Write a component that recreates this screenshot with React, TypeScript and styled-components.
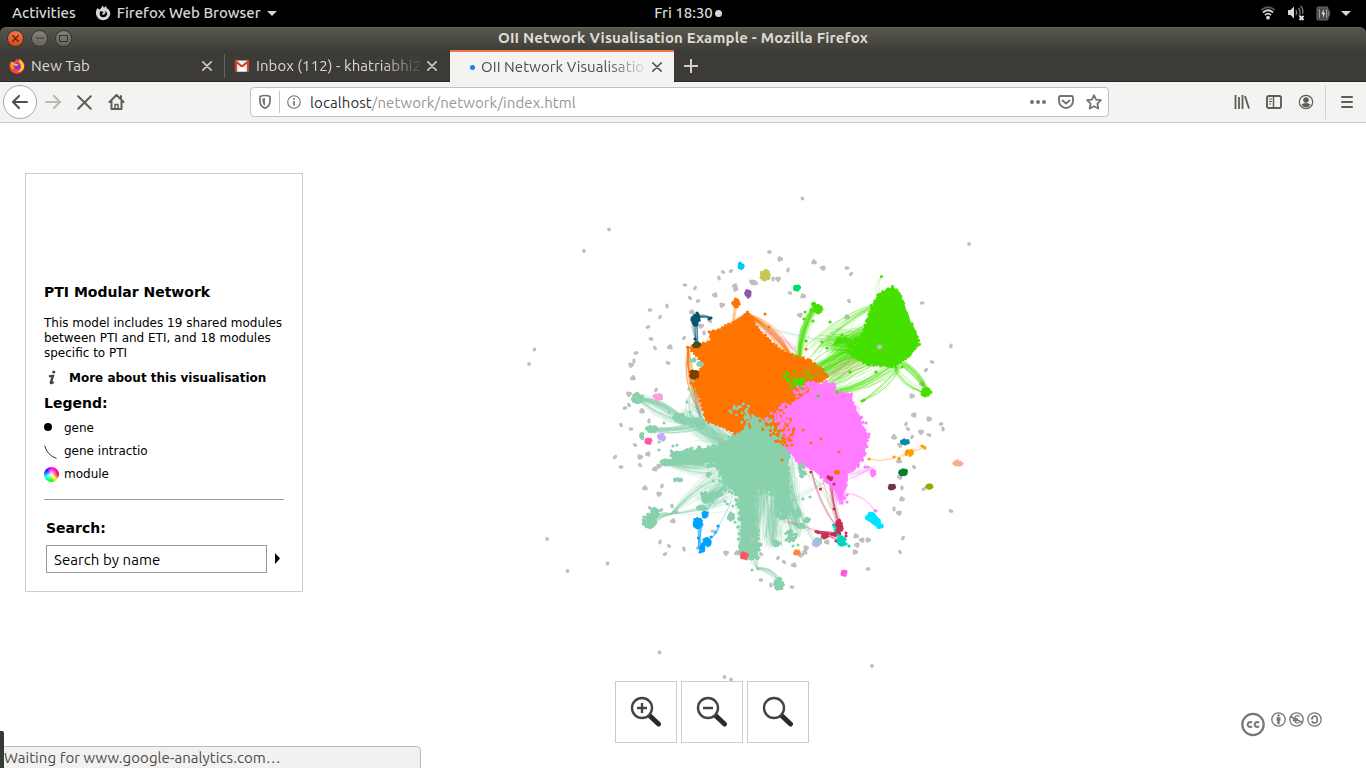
import React from "react";
import styled, { createGlobalStyle } from "styled-components";

const ui = '"Ubuntu", "Noto Sans", sans-serif';

const Global = createGlobalStyle`
  * { box-sizing: border-box; }
  html, body { margin: 0; height: 100%; overflow: hidden; background: #fff; }
  svg { display: block; flex: none; }
`;

const Screen = styled.div`
  width: 1366px;
  height: 768px;
  display: flex;
  flex-direction: column;
  background: #000;
  font-family: ${ui};
  overflow: hidden;
`;

const Text = styled.span<{ $size?: number; $track?: number }>`
  font-size: ${(p) => p.$size ?? 15}px;
  letter-spacing: ${(p) => p.$track ?? 0}px;
  white-space: nowrap;
`;

/* ---------- desktop bar ---------- */
const TopBar = styled.header`
  height: 27px;
  flex: none;
  display: grid;
  grid-template-columns: 1fr auto 1fr;
  align-items: center;
  color: #d6d6d6;
  font-weight: 500;
  line-height: 24px;
  padding-bottom: 1px;
`;
const TopLeft = styled.div`
  display: flex;
  align-items: center;
  padding-left: 12px;
`;
const AppMenu = styled.div`
  display: flex;
  align-items: center;
  margin-left: 19px;
  gap: 6px;
`;
const Clock = styled.div`
  display: flex;
  align-items: center;
  gap: 2px;
  padding-left: 10px;
`;
const ClockDot = styled.i`
  width: 7px;
  height: 7px;
  border-radius: 50%;
  background: #d6d6d6;
`;
const Tray = styled.div`
  display: flex;
  justify-content: flex-end;
  align-items: center;
  padding-right: 15px;
  gap: 11px;
`;

/* ---------- window ---------- */
const TitleBar = styled.div`
  height: 23px;
  flex: none;
  display: grid;
  grid-template-columns: 1fr auto 1fr;
  align-items: center;
  padding: 0 7px 2px;
  border-radius: 6px 6px 0 0;
  border-top: 1px solid #66655c;
  background: linear-gradient(#58574e, #3e3d39);
  color: #dfdbd2;
  font-weight: 700;
  line-height: 20px;
`;
const WindowButtons = styled.div`
  display: flex;
  gap: 7px;
`;
const WinButton = styled.span<{ $close?: boolean }>`
  width: 17px;
  height: 17px;
  display: grid;
  place-items: center;
  border-radius: 50%;
  border: 1px solid #33322e;
  background: ${(p) => (p.$close ? "linear-gradient(#f2764b, #dd4814)" : "linear-gradient(#84827a, #65645d)")};
`;

const TabStrip = styled.div`
  height: 32px;
  flex: none;
  display: flex;
  background: #3c3b37;
  border-bottom: 1px solid #282724;
`;
const Tab = styled.div<{ $active?: boolean; $line?: boolean }>`
  width: ${(p) => (p.$active ? 224 : 225)}px;
  height: ${(p) => (p.$active ? 32 : 31)}px;
  display: flex;
  align-items: center;
  padding: 0 ${(p) => (p.$active ? 12 : 13)}px 0 ${(p) => (p.$active ? 20 : 9)}px;
  gap: 6px;
  color: ${(p) => (p.$active ? "#4c4c4c" : "#dfdbd2")};
  background: ${(p) => (p.$active ? "#f4f3f1" : "transparent")};
  border-top: ${(p) => (p.$active ? "2px solid #f07746" : "0")};
  position: relative;
  ${(p) => p.$line && "&::after { content: ''; position: absolute; right: 0; top: 4px; height: 24px; border-right: 1px solid #66645e; }"}
`;
const TabLabel = styled(Text)<{ $fade?: boolean }>`
  flex: 1;
  overflow: hidden;
  line-height: 30px;
  ${(p) => p.$fade && "mask-image: linear-gradient(90deg, #000 calc(100% - 40px), rgba(0,0,0,.1));"}
`;
const Loading = styled.i`
  width: 5px;
  height: 5px;
  border-radius: 50%;
  background: #0a84ff;
`;
const NewTab = styled.div`
  width: 34px;
  display: grid;
  place-items: center;
`;

const NavBar = styled.div`
  height: 41px;
  flex: none;
  display: flex;
  align-items: center;
  background: #f4f3f1;
  border-bottom: 1px solid #cac8c6;
  color: #5e5d5a;
`;
const NavGroup = styled.div`
  width: 250px;
  padding-left: 3px;
  display: flex;
  align-items: center;
  gap: 16px;
`;
const BackButton = styled.div`
  width: 34px;
  height: 34px;
  margin-right: -8px;
  display: grid;
  place-items: center;
  border: 1px solid #aaa8a5;
  border-radius: 50%;
  background: #fff;
`;
const UrlBar = styled.div`
  width: 859px;
  height: 30px;
  display: flex;
  align-items: center;
  padding: 0 6px 0 7px;
  border: 1px solid #c3c0bd;
  border-radius: 4px;
  background: #fff;
  color: #737373;
`;
const UrlSplit = styled.i`
  width: 1px;
  height: 22px;
  margin: 0 7px;
  background: #c4c4c4;
`;
const Address = styled(Text)`
  flex: 1;
  margin-left: 9px;
  color: #969696;
  b { font-weight: 400; color: #303030; }
`;
const UrlActions = styled.div`
  display: flex;
  align-items: center;
  gap: 12px;
`;
const Tools = styled.div`
  flex: 1;
  height: 100%;
  display: flex;
  align-items: center;
  justify-content: flex-end;
  gap: 16px;
  padding-right: 12px;
`;
const MenuCell = styled.div`
  height: 34px;
  padding-left: 14px;
  margin-left: -5px;
  display: flex;
  align-items: center;
  border-left: 1px solid #d5d3d1;
`;

/* ---------- page ---------- */
const Page = styled.main`
  flex: 1;
  position: relative;
  background: #fff;
  padding: 50px 0 0 25px;
`;
const GraphCanvas = styled.svg`
  position: absolute;
  left: 0;
  top: 0;
`;
const Panel = styled.aside`
  position: relative;
  width: 278px;
  height: 419px;
  padding: 109px 18px 0;
  border: 1px solid #ccc;
  background: #fff;
  color: #000;
  font-family: "DejaVu Sans", sans-serif;
  font-size: 12px;
  line-height: 15px;
`;
const Heading = styled.h2`
  margin: 0;
  font-size: 14px;
  line-height: 18px;
`;
const Intro = styled.p`
  margin: 15px -10px 0 0;
`;
const More = styled.div`
  display: flex;
  align-items: center;
  height: 16px;
  margin: 9px 0 8px 3px;
  font-weight: 700;
  gap: 12px;
`;
const LegendRow = styled.div`
  height: 23px;
  display: flex;
  align-items: center;
`;
const LegendMark = styled.span`
  width: 20px;
`;
const Gene = styled.i`
  display: block;
  width: 8px;
  height: 8px;
  margin-bottom: 3px;
  border-radius: 50%;
  background: #000;
`;
const Wheel = styled.i`
  display: block;
  width: 15px;
  height: 15px;
  margin-bottom: 1px;
  border-radius: 50%;
  background: radial-gradient(#fff, rgba(255, 255, 255, 0) 60%),
    conic-gradient(#f0f, #f04 25%, #ff0 38%, #0f0 50%, #0ff 70%, #20f 85%, #f0f);
`;
const LegendList = styled.div`
  padding-top: 5px;
`;
const Rule = styled.div`
  width: 240px;
  height: 1px;
  margin: 13px 0 19px;
  background: #999;
`;
const SearchRow = styled.div`
  display: flex;
  align-items: center;
  margin-top: 8px;
  gap: 8px;
`;
const SearchField = styled.div`
  width: 221px;
  height: 28px;
  padding-left: 7px;
  border: 1px solid #999;
  font-family: ${ui};
  line-height: 28px;
`;
const SearchArrow = styled.svg`
  margin-bottom: 2px;
`;
const SearchBlock = styled.section`
  padding-left: 2px;
`;
const ZoomBar = styled.div`
  position: absolute;
  left: 615px;
  top: 558px;
  display: flex;
  gap: 4px;
`;
const ZoomButton = styled.div`
  width: 62px;
  height: 62px;
  display: grid;
  place-items: center;
  border: 1px solid #ccc;
  background: #fff;
`;
const License = styled.div`
  position: absolute;
  right: 44px;
  bottom: 31px;
  display: flex;
  align-items: flex-start;
  gap: 3px;
`;
const LicenseMark = styled.span`
  margin-right: 3px;
`;
const Status = styled.div`
  position: absolute;
  left: 0;
  bottom: 0;
  width: 421px;
  height: 22px;
  padding-left: 4px;
  border: 1px solid #bcb9b6;
  border-left: 0;
  border-bottom: 0;
  border-radius: 0 5px 0 0;
  background: #f2f1f0;
  color: #4c4c4c;
  line-height: 20px;
`;
const DockEdge = styled.i`
  position: absolute;
  left: 0;
  bottom: 0;
  width: 4px;
  height: 37px;
  border-radius: 0 2px 0 0;
  background: #343a37;
`;

/* ---------- network drawing ---------- */
type P = [number, number];
let seed = 7;
const rnd = () => {
  seed = (seed * 16807) % 2147483647;
  return seed / 2147483647;
};
const spread = () => rnd() + rnd() - 1;
const f = (n: number) => n.toFixed(1);

const ORANGE = "#ff7300";
const PINK = "#ff7bff";
const GREEN = "#46e000";
const MINT = "#88d1ac";
const CRIMSON = "#c72c55";

const dotPath = (pts: P[], r: number) =>
  pts.map(([x, y]) => `M${f(x - r)} ${f(y)}a${r} ${r} 0 1 0 ${2 * r} 0a${r} ${r} 0 1 0 ${-2 * r} 0`).join("");

const Dots = ({ pts, c, r = 1.6 }: { pts: P[]; c: string; r?: number }) => <path d={dotPath(pts, r)} fill={c} />;

const cloud = (x: number, y: number, rx: number, ry: number, n: number): P[] =>
  Array.from({ length: n }, () => {
    const a = rnd() * 6.283;
    const d = Math.sqrt(rnd());
    return [x + Math.cos(a) * rx * d, y + Math.sin(a) * ry * d] as P;
  });

const Cluster = ({ at, size, c, n = 26 }: { at: P; size: P; c: string; n?: number }) => (
  <Dots pts={cloud(at[0], at[1], Math.max(size[0] - 1.1, 0.5), Math.max(size[1] - 1.1, 0.5), Math.round(n * 1.3))} c={c} />
);

const Fan = ({ a, b, ra = 3, rb = 3, n = 12, c, bend = 8, o = 0.4 }: { a: P; b: P; ra?: number; rb?: number; n?: number; c: string; bend?: number; o?: number }) => {
  const len = Math.hypot(b[0] - a[0], b[1] - a[1]) || 1;
  const nx = -(b[1] - a[1]) / len;
  const ny = (b[0] - a[0]) / len;
  const lines: string[] = [];
  for (let i = 0; i < n; i++) {
    const x1 = a[0] + spread() * ra;
    const y1 = a[1] + spread() * ra;
    const x2 = b[0] + spread() * rb;
    const y2 = b[1] + spread() * rb;
    const k = bend * (0.2 + 1.6 * rnd());
    lines.push(`M${f(x1)} ${f(y1)}Q${f((x1 + x2) / 2 + nx * k)} ${f((y1 + y2) / 2 + ny * k)} ${f(x2)} ${f(y2)}`);
  }
  return (
    <g fill="none" stroke={c} strokeWidth={0.6} strokeOpacity={o}>
      {lines.map((d, i) => <path key={i} d={d} />)}
    </g>
  );
};

const Mass = ({ pts, c, jitter = 2, step = 3 }: { pts: P[]; c: string; jitter?: number; step?: number }) => {
  const rim: P[] = [];
  pts.forEach((p, i) => {
    const q = pts[(i + 1) % pts.length];
    const n = Math.max(1, Math.round(Math.hypot(q[0] - p[0], q[1] - p[1]) / step));
    for (let k = 0; k < n; k++) rim.push([p[0] + ((q[0] - p[0]) * k) / n + spread() * jitter, p[1] + ((q[1] - p[1]) * k) / n + spread() * jitter]);
  });
  return (
    <g>
      <polygon points={pts.map((p) => p.join(",")).join(" ")} fill={c} />
      <Dots pts={rim} c={c} />
    </g>
  );
};

const greySmall: P[] = [
  [769.5, 252], [788, 270], [723, 272], [731, 271], [719, 278], [685, 285], [695, 288], [690, 298], [698, 301], [667, 306], [650, 310], [660, 317],
  [710, 321], [648, 327], [704, 333], [651, 339], [684, 338], [655, 348], [636, 353], [634, 361], [668, 363], [656, 390], [629, 405], [625, 408],
  [773, 279], [847, 268], [851, 274], [849, 301], [922, 303], [951, 346], [932, 362], [926, 370], [621, 425], [631, 429], [649, 421],
  [635, 445], [615, 457], [640, 465], [621, 467], [662, 486], [650, 508], [661, 510], [672, 506], [676, 512], [660, 542], [669, 546], [665, 554],
  [684, 549], [698, 548], [778, 558], [784, 562], [761, 580], [771, 585], [792, 587], [906, 424], [908, 429], [941, 424], [943, 429],
  [929, 435], [912, 437], [914, 467], [924, 489], [894, 509], [951, 511], [903, 538], [900, 552], [868, 569], [902, 488], [790, 293],
];
const greyBig: P[] = [
  [780, 259], [735, 286], [735.5, 289], [715, 295], [722, 305], [692, 312], [701, 326], [670, 347], [631, 365], [633, 378], [629, 394], [642, 411], [752, 282], [755, 283],
  [778, 279], [814, 262], [823, 268], [803, 296], [800, 315], [847, 317], [922, 384], [912, 396], [914, 415], [929, 419], [648, 454], [640, 457],
  [655, 469], [659, 466], [645, 488], [659, 494], [673, 521], [726, 553], [737, 553], [921, 432], [894, 437], [900, 445], [899, 461], [900, 477],
  [902, 499], [899, 513], [856, 536], [862, 540], [868, 540], [857, 545], [855, 552], [827, 542], [806, 548], [805, 552], [801, 555], [794, 565], [663, 439],
];
const greyFar: P[] = [
  [969, 244], [802.5, 198.5], [609, 229.5], [584, 251], [534.5, 349.5], [529, 364], [547, 539], [567.5, 571], [607.5, 563.5], [659.5, 652.5], [872, 666], [724.5, 677], [731, 679.5],
];
const pairUp = (pts: P[], s: number): P[] =>
  pts.flatMap(([x, y], i) => {
    const a = i * 1.9;
    const dx = Math.cos(a) * s;
    const dy = Math.sin(a) * s;
    return [[x - dx, y - dy], [x + dx, y + dy]] as P[];
  });
const tripleUp = (pts: P[], s: number): P[] =>
  pts.flatMap(([x, y], i) => [0, 2.1, 4.2].map((t) => [x + Math.cos(t + i) * s, y + Math.sin(t + i) * s * 0.8] as P));

const orangeMass: P[] = [
  [747, 312], [742, 318], [733, 323], [722, 328], [709, 332], [711, 341], [700, 344], [688, 347], [694, 353], [699, 358], [703, 366], [697, 374], [691, 383],
  [697, 390], [700, 397], [704, 414], [706, 420], [716, 424], [724, 427], [735, 433], [750, 427], [775, 425], [784, 408], [797, 398], [815, 386], [828, 377], [823, 370], [811, 361],
  [796, 356], [783, 351], [770, 341], [757, 327],
];
const pinkMass: P[] = [
  [826, 382], [834, 386], [838, 393], [851, 394], [854, 407], [860, 416], [863, 428], [868, 435], [866, 447], [863, 459], [855, 468], [847, 472], [846, 484], [842, 499],
  [834, 490], [822, 477], [810, 468], [798, 463], [787, 447], [781, 430], [780, 409], [797, 398],
];
const greenMass: P[] = [
  [892, 287], [900, 294], [904, 307], [911, 324], [917, 337], [919, 344], [908, 357], [895, 366], [880, 365], [868, 364], [853, 357], [859, 342], [865, 327], [872, 306], [880, 293],
];
const mintMass: P[] = [
  [757, 418], [748, 428], [736, 434], [722, 445], [700, 449], [670, 452], [674, 460], [692, 462], [716, 463], [720, 472], [727, 485], [738, 496], [741, 525], [740, 543],
  [745, 556], [758, 557], [758, 540], [753, 510], [758, 488], [775, 491], [779, 513], [788, 514], [789, 490], [787, 465], [791, 452], [786, 436], [780, 420], [768, 420],
];

const Network = () => {
  seed = 7;
  return (
    <GraphCanvas width={1366} height={645} viewBox="0 123 1366 645">
      <Dots pts={pairUp(greySmall, 0.7)} c="#bfbfbf" r={1.7} />
      <Dots pts={tripleUp(greyBig, 1.2)} c="#bfbfbf" r={1.9} />
      <Dots pts={greyFar} c="#bfbfbf" r={1.9} />

      {/* loose edges between modules */}
      <Fan a={[880, 340]} b={[800, 385]} ra={20} rb={16} n={85} c={GREEN} bend={8} />
      <Fan a={[872, 335]} b={[833, 344]} ra={22} rb={17} n={130} c={GREEN} bend={-4} />
      <Fan a={[872, 307]} b={[812, 355]} ra={4} rb={14} n={16} c={GREEN} bend={8} />
      <Fan a={[895, 364]} b={[837, 392]} ra={8} rb={5} n={26} c={GREEN} bend={-8} />
      <Fan a={[875, 355]} b={[825, 385]} ra={16} rb={14} n={30} c={GREEN} bend={-3} />
      <Fan a={[880, 350]} b={[830, 375]} ra={16} rb={12} n={26} c="#c5a878" bend={5} />
      <Fan a={[900, 366]} b={[864, 400]} n={9} ra={2} rb={1} c={GREEN} bend={-7} />
      <Fan a={[901, 362]} b={[926, 389]} n={26} ra={5} c={GREEN} bend={-5} />
      <Fan a={[893, 364]} b={[923, 392]} n={10} ra={2} c={GREEN} bend={8} />
      <Fan a={[815, 307]} b={[799, 360]} n={40} ra={4} rb={5} c={GREEN} bend={7} />
      <Fan a={[881, 277]} b={[881, 300]} n={2} ra={0.5} c={GREEN} bend={5} />
      <Fan a={[893, 290]} b={[911, 338]} n={24} ra={2} rb={6} c={GREEN} bend={-6} />
      <Fan a={[747, 314]} b={[792, 356]} n={40} ra={2} rb={9} c={ORANGE} bend={-8} />
      <Fan a={[747, 314]} b={[712, 345]} n={40} ra={2} rb={12} c={ORANGE} bend={2} />
      <Fan a={[736, 306]} b={[733, 330]} n={6} c={ORANGE} bend={1} />
      <Fan a={[688, 347]} b={[702, 410]} n={26} ra={1} rb={6} c={ORANGE} bend={8} />
      <Fan a={[706, 420]} b={[745, 436]} n={22} ra={1} rb={7} c={ORANGE} bend={-2} o={0.6} />
      <Fan a={[764, 331]} b={[797, 350]} n={5} c={PINK} bend={-3} />
      <Fan a={[736, 319]} b={[846, 346]} n={3} ra={2} c={MINT} bend={6} />

      <Fan a={[640, 398]} b={[682, 420]} n={36} ra={4} rb={5} c={MINT} bend={-7} o={0.5} />
      <Fan a={[642, 402]} b={[698, 425]} n={15} ra={4} c={MINT} bend={8} />
      <Fan a={[652, 430]} b={[698, 426]} n={26} ra={5} rb={7} c={MINT} bend={4} o={0.5} />
      <Fan a={[688, 414]} b={[745, 455]} n={85} ra={18} rb={18} c={MINT} bend={2} />
      <Fan a={[700, 428]} b={[740, 452]} n={60} ra={14} rb={16} c={MINT} bend={1} />
      <Fan a={[666, 463]} b={[750, 450]} n={75} ra={5} rb={18} c={MINT} bend={5} o={0.5} />
      <Fan a={[662, 461]} b={[715, 471]} n={22} ra={3} rb={10} c={MINT} bend={6} />
      <Fan a={[652, 520]} b={[671, 514]} n={24} ra={6} rb={1} c={MINT} bend={-3} />
      <Fan a={[671, 514]} b={[725, 470]} n={24} ra={1} rb={15} c={MINT} bend={-5} />
      <Fan a={[671, 514]} b={[733, 500]} n={9} ra={1} rb={12} c={MINT} bend={4} />
      <Fan a={[706, 500]} b={[748, 465]} n={90} ra={14} rb={20} c={MINT} bend={2} />
      <Fan a={[750, 550]} b={[755, 462]} n={120} ra={12} rb={28} c={MINT} bend={2} o={0.45} />
      <Fan a={[773, 541]} b={[776, 470]} n={80} ra={12} rb={22} c={MINT} bend={-4} />
      <Fan a={[797, 528]} b={[781, 457]} n={95} ra={14} rb={17} c={MINT} bend={-3} />
      <Fan a={[753, 555]} b={[757, 568]} n={14} ra={8} rb={1} c={MINT} bend={0} />
      <Fan a={[757, 568]} b={[778, 580]} n={18} ra={1} rb={4} c={MINT} bend={-5} />
      <Fan a={[693, 390]} b={[695, 425]} n={8} ra={2} rb={8} c={MINT} bend={8} />
      <Fan a={[702, 370]} b={[702, 420]} n={10} ra={3} c="#5e9f9a" bend={10} />
      <Fan a={[813, 540]} b={[796, 480]} n={6} ra={3} rb={8} c={MINT} bend={-9} />
      <Fan a={[833, 508]} b={[797, 465]} n={5} ra={4} rb={6} c="#a4bf7d" bend={9} />
      <Fan a={[840, 473]} b={[794, 500]} n={5} ra={4} rb={5} c={MINT} bend={3} />

      <Fan a={[840, 500]} b={[836, 470]} n={70} ra={6} rb={16} c={PINK} bend={2} o={0.6} />
      <Fan a={[847, 493]} b={[875, 511]} n={2} ra={0.6} rb={0.6} c={PINK} bend={-5} o={0.6} />
      <Fan a={[850, 477]} b={[872, 468]} n={10} ra={5} c={PINK} bend={2} />
      <Fan a={[838, 528]} b={[812, 473]} n={3} ra={1.5} rb={1} c={CRIMSON} bend={-5} o={0.5} />
      <Fan a={[838, 522]} b={[829, 480]} n={13} ra={3} rb={7} c={CRIMSON} bend={-2} />
      <Fan a={[817, 532]} b={[838, 536]} n={18} ra={2} rb={5} c={CRIMSON} bend={-2} o={0.6} />
      <Fan a={[783, 521]} b={[818, 532]} n={4} ra={2} c={CRIMSON} bend={-2} o={0.25} />
      <Fan a={[869, 459]} b={[897, 457]} n={1} ra={0.4} rb={0.4} c="#ff9d00" bend={6} o={0.9} />
      <Fan a={[897, 457]} b={[924, 447]} n={4} c="#ff9d00" bend={-2} />
      <Fan a={[695, 318]} b={[711, 318]} n={9} ra={3} rb={1} c="#055570" bend={-3} o={0.6} />
      <Fan a={[695, 322]} b={[697, 345]} n={10} ra={5} rb={2.5} c="#055570" bend={0} o={0.6} />
      <Fan a={[700, 525]} b={[700, 548]} n={9} c="#00a2ff" bend={1} o={0.6} />
      <Fan a={[712, 538]} b={[719, 526]} n={3} ra={1} rb={1} c="#00a2ff" bend={2} o={0.7} />
      <Fan a={[719, 526]} b={[733, 493]} n={2} ra={1} c="#00a2ff" bend={3} o={0.3} />
      <Fan a={[707, 512]} b={[725, 484]} n={3} c="#00a2ff" bend={-3} o={0.3} />

      {/* solid cores */}
      <Mass pts={mintMass} c={MINT} jitter={4} step={2.5} />
      <Mass pts={pinkMass} c={PINK} jitter={2} step={2.8} />
      <Mass pts={orangeMass} c={ORANGE} jitter={1} step={4} />
      <Mass pts={greenMass} c={GREEN} jitter={1.2} />
      <Fan a={[850, 435]} b={[855, 405]} n={40} ra={14} rb={9} c={PINK} bend={-6} />
      <Fan a={[872, 350]} b={[795, 382]} ra={10} rb={14} n={16} c={GREEN} bend={6} o={0.3} />

      {/* mint satellites */}
      <Cluster at={[638, 398]} size={[7, 6]} c={MINT} n={34} />
      <Cluster at={[679, 417]} size={[7, 5]} c={MINT} n={30} />
      <Cluster at={[692, 421]} size={[14, 4]} c={MINT} n={34} />
      <Cluster at={[701, 425]} size={[5, 5]} c={MINT} />
      <Cluster at={[652, 429]} size={[7, 4]} c={MINT} n={34} />
      <Cluster at={[642, 436]} size={[3, 4]} c={MINT} n={12} />
      <Cluster at={[665, 462]} size={[5, 4]} c={MINT} />
      <Cluster at={[678, 480]} size={[5, 2.5]} c={MINT} n={12} />
      <Cluster at={[649, 521]} size={[8, 8]} c={MINT} n={60} />
      <Cluster at={[655, 513]} size={[5, 6]} c={MINT} n={28} />
      <Cluster at={[702, 508]} size={[6, 3]} c={MINT} />
      <Cluster at={[708, 499]} size={[7, 5]} c={MINT} n={30} />
      <Cluster at={[704, 494]} size={[4, 3]} c={MINT} n={14} />
      <Cluster at={[716, 494]} size={[7, 3]} c={MINT} n={24} />
      <Cluster at={[731, 517]} size={[4, 5]} c={MINT} />
      <Cluster at={[749, 549]} size={[11, 12]} c={MINT} n={120} />
      <Cluster at={[779, 584]} size={[5.5, 7]} c={MINT} n={40} />
      <Cluster at={[776, 543]} size={[5, 4]} c={MINT} n={20} />
      <Cluster at={[783, 507]} size={[10, 14]} c={MINT} n={80} />
      <Cluster at={[790, 536]} size={[8, 7]} c={MINT} n={24} />
      <Cluster at={[797, 513]} size={[5, 6]} c={MINT} n={18} />
      <Cluster at={[807, 520]} size={[4, 3]} c={MINT} n={14} />
      <Cluster at={[801, 526]} size={[5, 3]} c={MINT} n={14} />
      <Cluster at={[802, 470]} size={[5, 8]} c={MINT} n={26} />
      <Cluster at={[745, 495]} size={[22, 32]} c={MINT} n={45} />
      <Cluster at={[764, 480]} size={[28, 17]} c={MINT} n={80} />
      <Cluster at={[725, 456]} size={[42, 12]} c={MINT} n={70} />
      <Cluster at={[722, 473]} size={[20, 13]} c={MINT} n={26} />
      <Cluster at={[818, 541]} size={[5, 4]} c={MINT} />
      <Dots c={MINT} pts={[[689, 389], [687, 402], [690, 412], [669, 412], [664, 423], [659, 442], [659, 450], [673, 446], [677, 445], [793, 500], [803, 499], [810, 497], [798, 545], [793, 546], [752, 570], [758, 569], [693, 381]]} />
      <Cluster at={[693, 360]} size={[4, 2.5]} c={MINT} n={10} />
      <Cluster at={[700, 364]} size={[4, 2.5]} c={MINT} n={10} />

      {/* nodes that fall inside another module */}
      <Cluster at={[757, 423]} size={[8, 6]} c={MINT} n={50} />
      <Dots pts={cloud(755, 425, 20, 10, 34)} c={MINT} />
      <Dots pts={cloud(740, 411, 12, 8, 18)} c={MINT} />
      <Dots pts={cloud(783, 430, 11, 17, 44)} c={ORANGE} />
      <Dots pts={cloud(773, 424, 20, 14, 28)} c={ORANGE} />
      <Dots pts={cloud(786, 416, 11, 13, 45)} c={PINK} />
      <Dots pts={cloud(811, 391, 18, 9, 60)} c={PINK} />
      <Dots pts={cloud(770, 425, 20, 12, 8)} c={PINK} />
      <Dots pts={cloud(798, 380, 17, 11, 22)} c={GREEN} r={1.4} />
      <Cluster at={[799, 381]} size={[6, 5]} c={GREEN} n={18} />
      <Dots pts={[[736, 417], [803, 430], [811, 443], [821, 439], [839, 452], [782, 460], [792, 445], [791, 435], [806, 349], [765, 314], [769, 327], [691, 383], [698, 392]]} c={ORANGE} />

      {/* green satellites */}
      <Cluster at={[818, 309]} size={[5.5, 5]} c={GREEN} n={34} />
      <Cluster at={[814, 304]} size={[3, 2.5]} c={GREEN} n={9} />
      <Cluster at={[926, 392]} size={[6, 5]} c={GREEN} n={30} />
      <Cluster at={[841, 341]} size={[8, 5]} c={GREEN} n={14} />
      <Cluster at={[858, 348]} size={[13, 12]} c={GREEN} n={45} />
      <Dots c={GREEN} pts={[[881.5, 276.5], [830, 322], [805, 312], [811, 310], [804, 319], [813, 321], [806, 341], [794, 356], [822, 342], [827, 348], [838, 339], [842, 335], [850, 372], [876, 372], [864, 400], [862, 401], [837, 392], [818, 396], [896, 367], [902, 367]]} />
      <Cluster at={[879.5, 347]} size={[3, 2]} c="#bfbfbf" n={8} />

      {/* small modules */}
      <Cluster at={[741, 265.5]} size={[3.5, 4.5]} c="#00c8ff" n={18} />
      <Cluster at={[765, 275.5]} size={[5.5, 6.5]} c="#cbc553" n={40} />
      <Cluster at={[748, 293.5]} size={[3.5, 5]} c="#8e55af" n={22} />
      <Cluster at={[797, 288]} size={[4, 3.5]} c="#00dc6e" n={20} />
      <Cluster at={[736, 303]} size={[4.5, 5]} c={ORANGE} n={26} />
      <Cluster at={[695.5, 319]} size={[5, 7.5]} c="#055570" n={50} />
      <Dots pts={[[711, 318], [695, 339], [709, 319]]} c="#055570" />
      <Cluster at={[696.5, 345]} size={[4.5, 3.5]} c="#494b20" n={20} />
      <Cluster at={[694, 374.5]} size={[5.2, 5]} c="#7b3e00" n={42} />
      <Cluster at={[658, 397]} size={[5.5, 4]} c="#ff9fd2" n={26} />
      <Cluster at={[661.5, 436.5]} size={[4.5, 3.5]} c="#c8a7ff" n={22} />
      <Cluster at={[649, 441]} size={[4.5, 3.5]} c="#ff57a5" n={20} />
      <Cluster at={[698, 523]} size={[5.5, 6]} c="#00a2ff" n={46} />
      <Cluster at={[705, 514.5]} size={[4, 4]} c="#00a2ff" n={20} />
      <Cluster at={[707, 542]} size={[4.5, 5]} c="#00a2ff" n={30} />
      <Cluster at={[702, 548]} size={[3.5, 4.5]} c="#00a2ff" n={18} />
      <Dots pts={[[698.5, 538], [711, 537], [715, 532], [718, 526], [700, 552]]} c="#00a2ff" />
      <Cluster at={[744, 555.5]} size={[4.5, 4.5]} c="#ff5667" n={34} />
      <Cluster at={[797, 553]} size={[3.5, 3.5]} c="#ff8442" n={20} />
      <Cluster at={[816, 543.5]} size={[4, 4]} c="#abbcea" n={28} />
      <Cluster at={[871, 517]} size={[6, 5]} c="#00e5ff" n={44} />
      <Cluster at={[876, 521]} size={[5, 5]} c="#00e5ff" n={34} />
      <Cluster at={[880, 526]} size={[4, 3.5]} c="#00e5ff" n={18} />
      <Cluster at={[844, 573]} size={[3.5, 4]} c="#ff58df" n={20} />
      <Cluster at={[905, 442]} size={[5, 3.5]} c="#008ba0" n={22} />
      <Cluster at={[909.5, 453]} size={[5, 4]} c="#ff9d00" n={28} />
      <Dots pts={[[869, 459], [894, 457], [899, 458.5], [922, 446], [924, 447], [925, 448]]} c="#ff9d00" />
      <Cluster at={[957.5, 463.5]} size={[5.5, 3.5]} c="#faad91" n={24} />
      <Cluster at={[903, 472]} size={[5, 4]} c="#00802b" n={28} />
      <Cluster at={[892, 487]} size={[4, 3.5]} c="#73334f" n={20} />
      <Cluster at={[929.5, 486.5]} size={[4, 3]} c="#99a800" n={18} />
      <Cluster at={[839, 527]} size={[4.5, 8]} c={CRIMSON} n={38} />
      <Cluster at={[825, 536]} size={[4.5, 3]} c={CRIMSON} n={18} />
      <Cluster at={[834, 534]} size={[4, 2.5]} c={CRIMSON} n={10} />
      <Dots pts={[[811, 472], [820.5, 489], [834, 509], [834, 484], [816, 531.5], [818, 532], [846, 533], [846, 536], [836, 541]]} c={CRIMSON} />
      <Cluster at={[830, 478]} size={[3.5, 3.5]} c={CRIMSON} n={8} />
      <Cluster at={[837, 472.5]} size={[3, 3]} c={ORANGE} n={6} />
      <Cluster at={[841.5, 541]} size={[5, 5.5]} c="#00d5bb" n={36} />
      <Dots pts={[[833.5, 525], [835, 527], [835, 530], [846, 544], [849, 546], [838, 535]]} c="#00d5bb" />
      <Cluster at={[873, 473]} size={[3.5, 4]} c={PINK} n={16} />
      <Dots pts={[[865, 467], [868, 467], [866, 423], [876, 511], [875, 510.5], [847, 502], [842, 503], [847, 495], [845, 498]]} c={PINK} />
      <Dots pts={pairUp([[713, 531], [752, 540], [761, 554]], 0.8)} c="#bfbfbf" />
    </GraphCanvas>
  );
};

/* ---------- icons ---------- */
const Cross = ({ c, s = 10, w = 1.7 }: { c: string; s?: number; w?: number }) => (
  <svg width={s} height={s} viewBox="0 0 10 10" stroke={c} strokeWidth={w} strokeLinecap="round"><path d="M.8.8l8.4 8.4M9.2.8L.8 9.2" /></svg>
);
const Caret = () => <svg width="10" height="5" viewBox="0 0 10 5"><path d="M0 0h10L5 5z" fill="#d6d6d6" /></svg>;

const Lens = ({ sign }: { sign?: "+" | "-" }) => (
  <svg width="32" height="32" viewBox="0 0 32 32" fill="none">
    <path d="M19.5 19.5l9 8.5" stroke="#2c2a29" strokeWidth="5" strokeLinecap="round" />
    <circle cx="12" cy="12" r="10" stroke="#444" strokeWidth="2.4" fill="#fff" />
    {sign && <path d="M7 12h10" stroke="#444" strokeWidth="2.5" />}
    {sign === "+" && <path d="M12 7v10" stroke="#444" strokeWidth="2.4" />}
  </svg>
);

export default function App() {
  return (
    <Screen>
      <Global />
      <TopBar>
        <TopLeft>
          <Text>Activities</Text>
          <AppMenu>
            <svg width="16" height="16" viewBox="0 0 16 16">
              <path d="M2.4 3.2L4.500 4.600C6 3.600 7 2 7.500.6L9 2.800 11 1l.7 2.300C14 4.500 15.500 6.500 15.300 9A7.200 7.200 0 0 1 1 9C.8 6.700 1.300 4.500 2.400 3.200z" fill="#d6d6d6" />
              <path d="M5 6.300l2.400.2 1.200 1.300-1.800 1c.3 1.300 2.600 1.300 3.400-.2.500-1 .1-2-.6-2.600 2 .5 2.800 2 2.500 3.600-.8 3.300-6.500 3.600-7.400.1z" fill="#000" />
            </svg>
            <Text>Firefox Web Browser</Text>
            <Caret />
          </AppMenu>
        </TopLeft>
        <Clock><Text>Fri 18:30</Text><ClockDot /></Clock>
        <Tray>
          <svg width="16" height="14" viewBox="0 0 16 14" fill="none" strokeWidth="1.8">
            <path d="M1.500 4Q8-1.500 14.500 4" stroke="#565656" /><path d="M3 6.500Q8 2 13 6.500M5 9Q8 6.300 11 9" stroke="#d6d6d6" /><circle cx="8" cy="11.700" r="1.900" fill="#d6d6d6" />
          </svg>
          <svg width="18" height="16" viewBox="0 0 18 16" fill="none">
            <path d="M1 5h2.500L7 1.500v12L3.500 10H1z" fill="#d6d6d6" /><path d="M9 5q1.500 2.500 0 5M11.500 3q3 4 .5 8M13.500 1q3.500 4 2 8" stroke="#777" strokeWidth="1.300" /><path d="M12.500 11l4 4m0-4l-4 4" stroke="#e8e8e8" strokeWidth="1.800" />
          </svg>
          <svg width="14" height="15" viewBox="0 0 14 15"><rect x="1" y="1" width="11" height="13" rx="1" fill="#4a4a4a" stroke="#6a6a6a" /><path d="M3.500 3v9M10.500 3v9" stroke="#999" /><path d="M7.800 3L5.500 8h1.400v4l2.200-5H7.700z" fill="#ddd" /><path d="M13 4.500v6" stroke="#aaa" /></svg>
          <Caret />
        </Tray>
      </TopBar>

      <TitleBar>
        <WindowButtons>
          <WinButton $close><Cross c="#5a2412" s={7} w={1.8} /></WinButton>
          <WinButton><svg width="8" height="2"><path d="M0 1h8" stroke="#33322e" /></svg></WinButton>
          <WinButton><svg width="9" height="7"><rect x=".5" y=".5" width="8" height="6" fill="none" stroke="#33322e" /></svg></WinButton>
        </WindowButtons>
        <Text $track={0.16}>OII Network Visualisation Example - Mozilla Firefox</Text>
        <span />
      </TitleBar>

      <TabStrip>
        <Tab $line>
          <svg width="16" height="16" viewBox="0 0 16 16">
            <path d="M2.300 3.500L4.500 4.500Q7 3 7.500.5L9.500 3l1.500-2q3.500 2 4.300 5.500.8 4-1.600 6.600A7.500 7.500 0 0 1 .6 9.500Q0 6 2.300 3.500z" fill="#ff453f" />
            <path d="M9.500 1l3 2q3.400 3 2.300 7-1.500 4-6.300 4 5-3 3-8Q9.500 4 9.500 1z" fill="#ffcf36" /><path d="M2.300 3.500L5 4.500l3 2-2.500 1.500L7 11H3Q.5 8 2.300 3.500z" fill="#ff9a20" /><circle cx="8" cy="8.300" r="3.300" fill="#7b36e8" /><path d="M4 5.500l4 .4 1.500 1-3 1.400z" fill="#ffc02c" />
          </svg>
          <TabLabel $track={0.08}>New Tab</TabLabel><Cross c="#cbc7bf" />
        </Tab>
        <Tab>
          <svg width="16" height="13" viewBox="0 0 16 13"><rect x="1.500" y="1.500" width="13" height="11" fill="#eee" /><path d="M2 12.500V2.500L8 7.500l6-5v10" fill="none" stroke="#d93e32" strokeWidth="2.200" /><path d="M3.500 12.500L7 8h2l3.500 4.500z" fill="#fff" /></svg>
          <TabLabel $fade $track={0.08}>Inbox (112) - khatriabhi2</TabLabel><Cross c="#cbc7bf" />
        </Tab>
        <Tab $active><Loading /><TabLabel $fade $track={0.08}>OII Network Visualisatio</TabLabel><Cross c="#5e5d5a" /></Tab>
        <NewTab><svg width="14" height="14" stroke="#d4d0c8" strokeWidth="2"><path d="M7 0v14M0 7h14" /></svg></NewTab>
      </TabStrip>

      <NavBar>
        <NavGroup>
          <BackButton><svg width="16" height="14" viewBox="0 0 16 14" fill="none" stroke="#4f4e4c" strokeWidth="2" strokeLinecap="round"><path d="M15 7H1.500M7 1L1 7l6 6" /></svg></BackButton>
          <svg width="16" height="14" viewBox="0 0 16 14" fill="none" stroke="#b9b8b5" strokeWidth="2" strokeLinecap="round"><path d="M1 7h13.500M9 1l6 6-6 6" /></svg>
          <Cross c="#5e5d5a" s={15} w={1.3} />
          <svg width="17" height="16" viewBox="0 0 16 16" fill="none" stroke="#5e5d5a" strokeWidth="2" strokeLinejoin="round" strokeLinecap="round"><path d="M1 8l7-7 7 7M3 7.500V15h10V7.500" /><path d="M6.500 15v-4.500h3V15" strokeWidth="1.500" /><path d="M12.500 4V2" /></svg>
        </NavGroup>
        <UrlBar>
          <svg width="14" height="16" viewBox="0 0 14 16" fill="none"><path d="M7 1.500q-3 0-5 1v5Q2 12 7 14.300 12 12 12 7.500v-5q-2-1-5-1z" stroke="#737373" strokeWidth="1.700" /><path d="M7 4v8Q4.500 10.500 4.500 7.500V4.500z" fill="#737373" /></svg>
          <UrlSplit />
          <svg width="14" height="14" viewBox="0 0 14 14" fill="none"><circle cx="7" cy="7" r="6.300" stroke="#737373" strokeWidth="1.100" /><path d="M7 6v4.500" stroke="#737373" strokeWidth="1.700" /><circle cx="7" cy="3.900" r="1" fill="#737373" /></svg>
          <Address $track={0.09}><b>localhost</b>/network/network/index.html</Address>
          <UrlActions>
            <svg width="16" height="4" fill="#737373"><circle cx="2" cy="2" r="2" /><circle cx="8" cy="2" r="2" /><circle cx="14" cy="2" r="2" /></svg>
            <svg width="16" height="14" viewBox="0 0 16 14" fill="none" stroke="#737373" strokeWidth="1.900" strokeLinecap="round"><path d="M2.500 1h11q1.500 0 1.500 1.500V6a7 7 0 0 1-14 0V2.500Q1 1 2.500 1z" /><path d="M4.500 5.500L8 8.500l3.500-3" /></svg>
            <svg width="16" height="16" viewBox="0 0 16 16" fill="none" stroke="#737373" strokeWidth="1.800" strokeLinejoin="round"><path d="M8 1.200l2.100 4.400 4.800.6-3.500 3.400.9 4.900L8 12.200l-4.300 2.300.9-4.900L1.100 6.200l4.800-.6z" /></svg>
          </UrlActions>
        </UrlBar>
        <Tools>
          <svg width="16" height="16" viewBox="0 0 16 16" fill="none" stroke="#5e5d5a" strokeWidth="1.800"><path d="M1.500 1v14M5 3v12M8.500 1v14M11 2l4 12.500" /></svg>
          <svg width="16" height="14" viewBox="0 0 16 14" fill="none" stroke="#5e5d5a"><rect x="1" y="1" width="14" height="12" rx="1.800" strokeWidth="1.900" /><path d="M7.500 1v12" strokeWidth="1.500" /><path d="M3 4h3M3 6.500h3M3 9h2" strokeWidth="1" /></svg>
          <svg width="16" height="16" viewBox="0 0 16 16"><circle cx="8" cy="8" r="6.700" fill="none" stroke="#5e5d5a" strokeWidth="1.200" /><circle cx="8" cy="6" r="2.800" fill="#5e5d5a" /><path d="M3.500 10.500q1.500-1.500 4.500-1.500t4.500 1.500a5 5 0 0 1-9 0z" fill="#5e5d5a" /></svg>
          <MenuCell><svg width="14" height="12" stroke="#5e5d5a" strokeWidth="2" strokeLinecap="round"><path d="M2 1h10M2 6h10M2 11h10" /></svg></MenuCell>
        </Tools>
      </NavBar>

      <Page>
        <Network />
        <Panel>
          <Heading>PTI Modular Network</Heading>
          <Intro>This model includes 19 shared modules<br />between PTI and ETI, and 18 modules<br />specific to PTI</Intro>
          <More>
            <svg width="10" height="16" viewBox="0 0 10 16" fill="none"><circle cx="6.800" cy="2" r="1.600" fill="#444" /><path d="M2 6.500q2-.8 4-.6L3.800 12.500q0 1.500 2.800-.7" stroke="#444" strokeWidth="2.300" /></svg>
            More about this visualisation
          </More>
          <Heading>Legend:</Heading>
          <LegendList>
            <LegendRow><LegendMark><Gene /></LegendMark>gene</LegendRow>
            <LegendRow><LegendMark><svg width="13" height="14" fill="none" stroke="#333" strokeWidth="1"><path d="M.7.7Q3 10 12.500 13.500" /></svg></LegendMark>gene intractio</LegendRow>
            <LegendRow><LegendMark><Wheel /></LegendMark>module</LegendRow>
          </LegendList>
          <Rule />
          <SearchBlock>
            <Heading>Search:</Heading>
            <SearchRow>
              <SearchField><Text $track={0.07}>Search by name</Text></SearchField>
              <SearchArrow width="5" height="11"><path d="M0 0l5 5.500L0 11z" /></SearchArrow>
            </SearchRow>
          </SearchBlock>
        </Panel>
        <ZoomBar>
          <ZoomButton><Lens sign="+" /></ZoomButton>
          <ZoomButton><Lens sign="-" /></ZoomButton>
          <ZoomButton><Lens /></ZoomButton>
        </ZoomBar>
        <License>
          <LicenseMark><svg width="24" height="25" viewBox="0 0 24 25" fill="none" stroke="#777"><circle cx="12" cy="12.500" r="10.700" strokeWidth="2.200" /><path d="M11 10.800a2.500 2.500 0 1 0 0 3.400M18 10.800a2.500 2.500 0 1 0 0 3.400" strokeWidth="2" /></svg></LicenseMark>
          <svg width="15" height="15" viewBox="0 0 15 15" fill="none" stroke="#777"><circle cx="7.500" cy="7.500" r="6.700" strokeWidth="1.300" /><circle cx="7.500" cy="3.500" r="1.200" fill="#777" stroke="none" /><path d="M5.500 5.300h4v3.500h-.8v3.500H6.300V8.800h-.8z" fill="#777" stroke="none" /></svg>
          <svg width="15" height="15" viewBox="0 0 15 15" fill="none" stroke="#777"><circle cx="7.500" cy="7.500" r="6.700" strokeWidth="1.300" /><path d="M10.500 4.500Q6 2 5.500 7.500q.5 5 5 3M3.800 6.800h5M3.800 8.500h5" strokeWidth="1.300" /><path d="M1.500 4.500l12 6" strokeWidth="1.500" /></svg>
          <svg width="15" height="15" viewBox="0 0 15 15" fill="none" stroke="#777"><circle cx="7.500" cy="7.500" r="6.700" strokeWidth="1.300" /><path d="M5 6.500Q5.500 4 7.800 4t2.500 3.500T7.800 11Q5.500 11 5 9" strokeWidth="1.700" /><path d="M3.300 6h3.400L5 8z" fill="#777" stroke="none" /></svg>
        </License>
        <Status><Text $track={0.07}>Waiting for www.google-analytics.com…</Text></Status>
        <DockEdge />
      </Page>
    </Screen>
  );
}
